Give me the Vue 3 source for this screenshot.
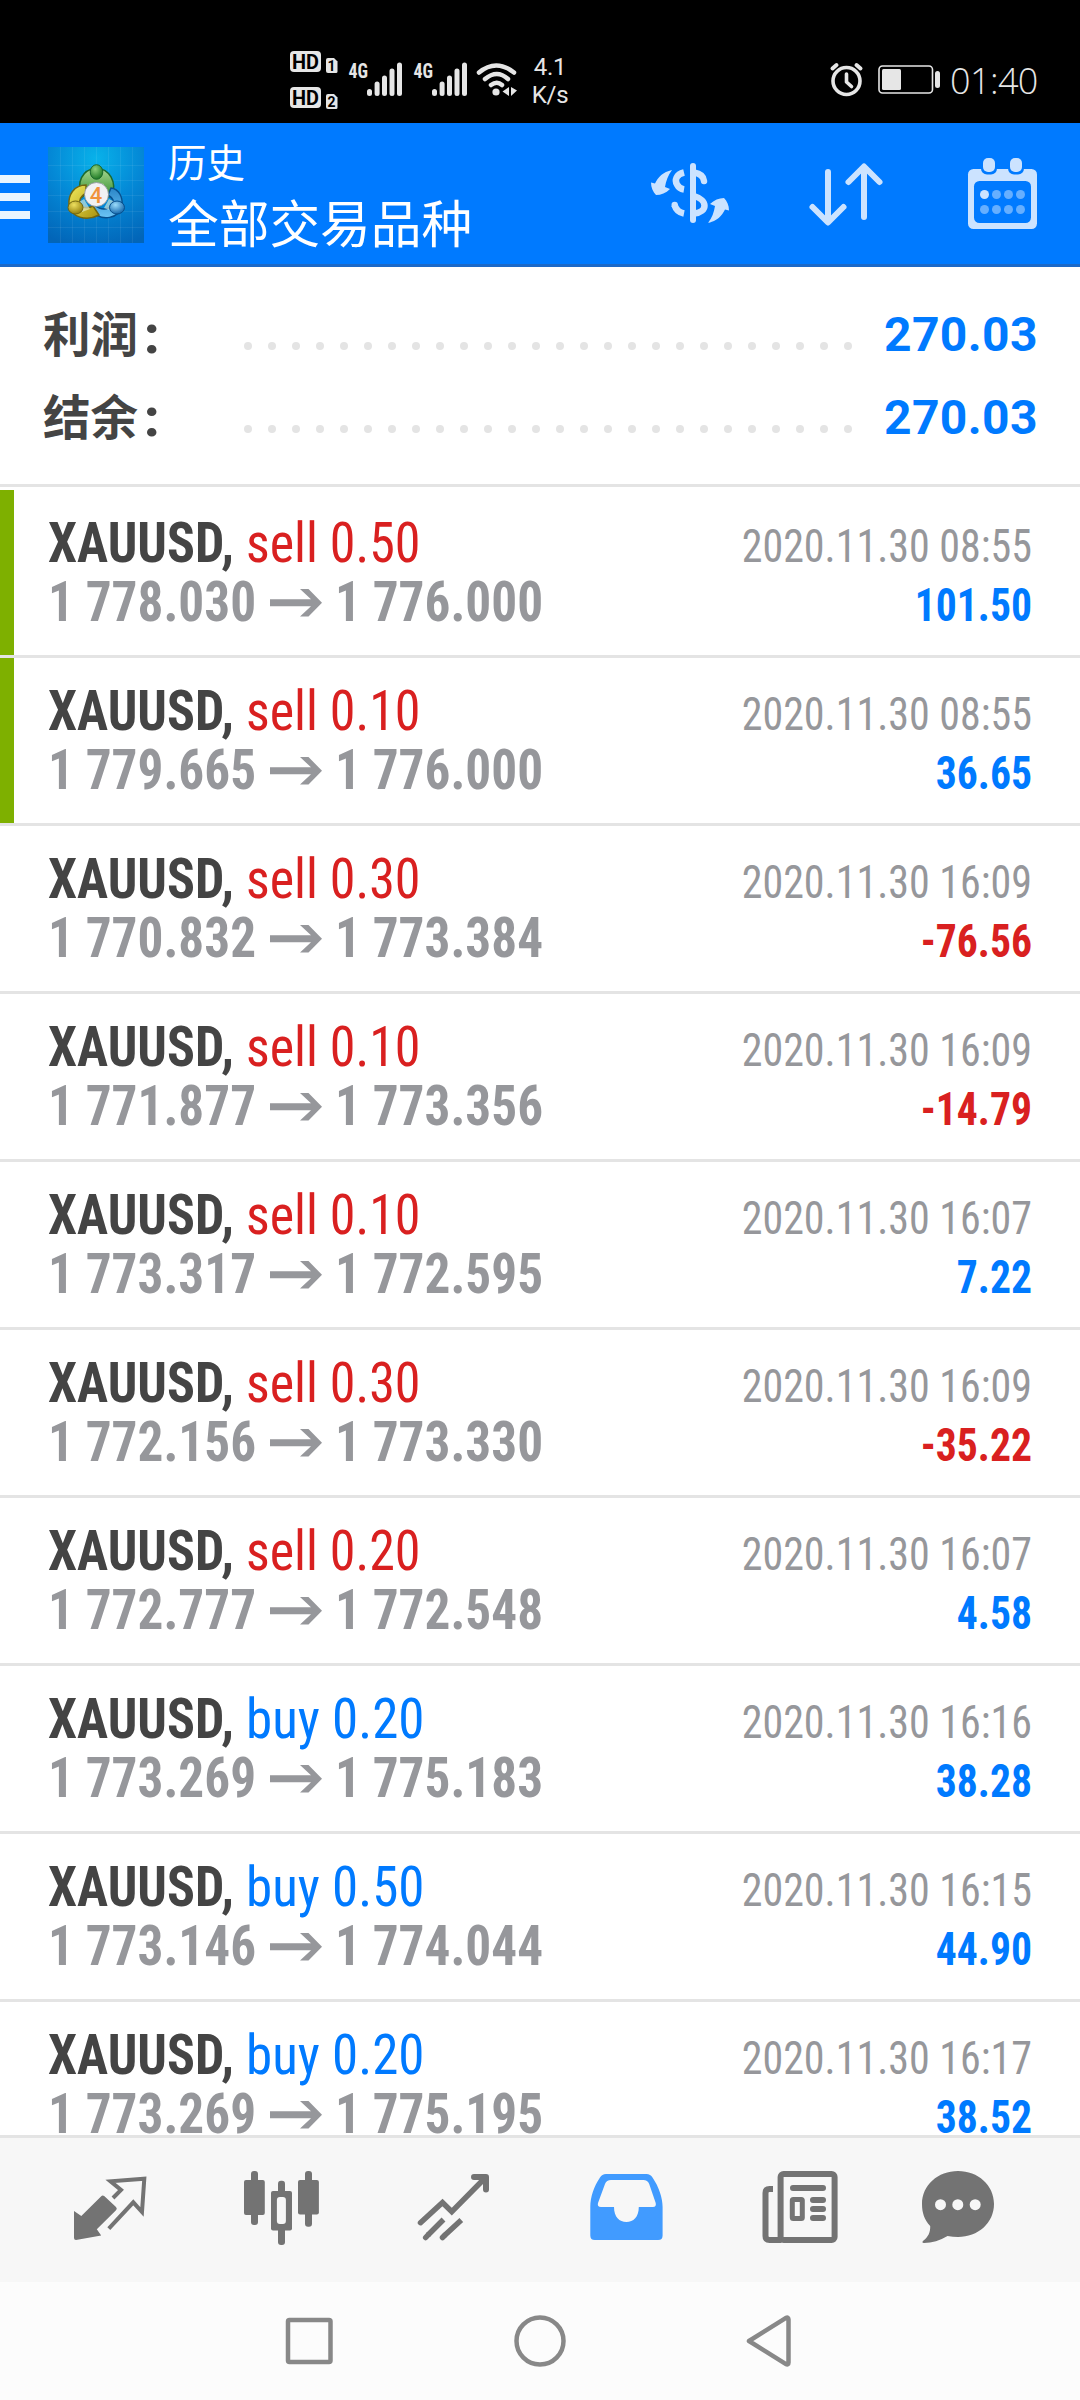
<script setup>
const summary = [
  { label: '利润', value: '270.03' },
  { label: '结余', value: '270.03' },
]
const dots = Array.from({ length: 26 }, (_, i) => i)
const deals = [
  { side: 'sell', vol: '0.50', from: '1 778.030', to: '1 776.000', time: '2020.11.30 08:55', profit: '101.50', mark: true },
  { side: 'sell', vol: '0.10', from: '1 779.665', to: '1 776.000', time: '2020.11.30 08:55', profit: '36.65', mark: true },
  { side: 'sell', vol: '0.30', from: '1 770.832', to: '1 773.384', time: '2020.11.30 16:09', profit: '-76.56' },
  { side: 'sell', vol: '0.10', from: '1 771.877', to: '1 773.356', time: '2020.11.30 16:09', profit: '-14.79' },
  { side: 'sell', vol: '0.10', from: '1 773.317', to: '1 772.595', time: '2020.11.30 16:07', profit: '7.22' },
  { side: 'sell', vol: '0.30', from: '1 772.156', to: '1 773.330', time: '2020.11.30 16:09', profit: '-35.22' },
  { side: 'sell', vol: '0.20', from: '1 772.777', to: '1 772.548', time: '2020.11.30 16:07', profit: '4.58' },
  { side: 'buy', vol: '0.20', from: '1 773.269', to: '1 775.183', time: '2020.11.30 16:16', profit: '38.28' },
  { side: 'buy', vol: '0.50', from: '1 773.146', to: '1 774.044', time: '2020.11.30 16:15', profit: '44.90' },
  { side: 'buy', vol: '0.20', from: '1 773.269', to: '1 775.195', time: '2020.11.30 16:17', profit: '38.52' },
]
</script>

<template>
  <div class="screen">
    <div class="status">
      <svg class="sig" width="230" height="70" viewBox="290 45 230 70" fill="#e6e6e6">
        <g v-for="(n, i) in [1, 2]" :key="n" :transform="`translate(0 ${i * 36})`">
          <rect x="290" y="51" width="31" height="21" rx="4" />
          <text x="305.5" y="69" text-anchor="middle" class="hd" textLength="27" lengthAdjust="spacingAndGlyphs">HD</text>
          <path d="M328 58h6l3.500 3.500V71.500a1.500 1.500 0 0 1-1.500 1.500h-8a2 2 0 0 1-2-2V60a2 2 0 0 1 2-2z" />
          <text x="331.500" y="71" text-anchor="middle" class="sim">{{ n }}</text>
        </g>
        <g v-for="(dx, i) in [0, 65]" :key="'s' + i" :transform="`translate(${dx} 0)`">
          <text x="348.500" y="77.500" class="net" textLength="19.500" lengthAdjust="spacingAndGlyphs">4G</text>
          <path d="M369.500 91.500v2M377.100 84v9.500M384.500 78v15.500M392 71v22.500M399.500 65v28.500" stroke="#e6e6e6" stroke-width="5" stroke-linecap="round" />
        </g>
        <g fill="none" stroke="#e6e6e6" stroke-width="4.500" stroke-linecap="round">
          <path d="M479 72.500q17-14 35 0M485 79q12-10 23 0M491 85q6-4.500 11 0" />
        </g>
        <circle cx="496" cy="92" r="3.600" />
        <path d="M509 87v9l-6.500-4.500zM511 87v9l6-5.500z" />
      </svg>
      <div class="speed"><span>4.1</span><span>K/s</span></div>
      <svg class="pow" width="112" height="40" viewBox="829 60 112 40" fill="none" stroke="#e6e6e6">
        <circle cx="846.500" cy="81" r="13.500" stroke-width="3.600" />
        <path d="M846.500 74v8l5 4.500" stroke-width="3.600" stroke-linecap="round" stroke-linejoin="round" />
        <path d="M832.500 68.500l4-3.500M860.500 68.500l-4-3.500" stroke-width="4" stroke-linecap="round" />
        <rect x="879" y="66" width="53.500" height="27" rx="3.500" stroke-width="1.600" />
        <rect x="882" y="69" width="19" height="21" rx="1.500" fill="#e6e6e6" stroke="none" />
        <rect x="935" y="71" width="5" height="17" rx="2.500" fill="#e6e6e6" stroke="none" />
      </svg>
      <span class="clock">01:40</span>
    </div>

    <header>
      <div class="menu"><i></i><i></i><i></i></div>
      <svg class="logo" width="96" height="96" viewBox="0 0 96 96">
        <defs>
          <radialGradient id="bg" cx=".5" cy=".12" r=".95"><stop offset="0" stop-color="#08b2ea" /><stop offset=".5" stop-color="#0488d6" /><stop offset="1" stop-color="#0265b8" /></radialGradient>
          <linearGradient id="gr" x2="0" y2="1"><stop offset="0" stop-color="#a9d893" /><stop offset="1" stop-color="#2f8d2b" /></linearGradient>
          <linearGradient id="ye" x2="1" y2="1"><stop offset="0" stop-color="#f2ea5c" /><stop offset="1" stop-color="#a8920f" /></linearGradient>
          <linearGradient id="bl" x2="0" y2="1"><stop offset="0" stop-color="#2a86c8" /><stop offset="1" stop-color="#6cc4f4" /></linearGradient>
          <radialGradient id="hg" cx=".4" cy=".3" r=".7"><stop offset="0" stop-color="#8fd07c" /><stop offset="1" stop-color="#1f7a25" /></radialGradient>
          <radialGradient id="hy" cx=".4" cy=".3" r=".7"><stop offset="0" stop-color="#eee060" /><stop offset="1" stop-color="#94800d" /></radialGradient>
          <radialGradient id="hb" cx=".4" cy=".3" r=".7"><stop offset="0" stop-color="#9bdcfb" /><stop offset="1" stop-color="#1468ae" /></radialGradient>
        </defs>
        <rect width="96" height="96" fill="url(#bg)" />
        <path d="M0 18.500h96M0 33.500h96M0 48.500h96M0 64.500h96M0 80.500h96M12.500 0v96M24.500 0v96M36.500 0v96M48.500 0v96M60.500 0v96M72.500 0v96M84.500 0v96" stroke="#fff" stroke-opacity=".07" />
        <path d="M34 50C28 35 34 23 48 21c14 1 21 14 16 28l-8 2q3-14-8-15-10 1-9 10z" fill="url(#gr)" stroke="#1c6a2e" stroke-width="1.500" />
        <path d="M63 41c8 1 12 9 11 18-3 12-19 17-33 4l5-5q11 8 18 0 4-5-4-10z" fill="url(#bl)" stroke="#07508e" stroke-width="1.500" />
        <path d="M38 38c-12 0-18 10-17 20 2 12 17 17 30 10l-6-9q-8 4-13-1-2-7 6-12z" fill="url(#ye)" stroke="#716611" stroke-width="1.500" />
        <path d="M41 37l3 5h9l3-5-8-2zM31 55l5-3 6 10-8 3zM56 61l5-9 6 3-3 9z" fill="#e8f3dc" fill-opacity=".6" />
        <ellipse cx="48.500" cy="25" rx="6.300" ry="7.300" fill="url(#hg)" stroke="#1c6a2e" />
        <ellipse cx="27.500" cy="60.500" rx="7.500" ry="6.500" fill="url(#hy)" stroke="#716611" />
        <ellipse cx="69" cy="60.500" rx="7.500" ry="6.500" fill="url(#hb)" stroke="#07508e" />
        <circle cx="48.500" cy="47.500" r="12" fill="#f1f1f3" stroke="#8a8f94" stroke-width=".8" />
        <text x="48" y="55.500" text-anchor="middle" class="four">4</text>
      </svg>
      <div class="titles"><span class="t1">历史</span><span class="t2">全部交易品种</span></div>
      <svg class="act" width="400" height="80" viewBox="645 153 400 80" fill="#cce3ff">
        <g>
          <path d="M684 172.500c-8 2-9.500 7.500-7 12 1.500 3 4 4.500 7 5M674.500 205c1.500 5 4.500 7.500 9.500 8.500" fill="none" stroke="#cce3ff" stroke-width="6.500" />
          <circle cx="674.700" cy="205" r="3.200" />
          <path d="M693 166v54" stroke="#cce3ff" stroke-width="6" stroke-linecap="round" />
          <path d="M694 172.500c6 1 9.500 3.500 10 8.500M694 196c14 4 14 16 0 17.500" fill="none" stroke="#cce3ff" stroke-width="6.500" stroke-linecap="round" />
          <path d="M672 170c-9 2-14 7-17 13.500l-4-1c0 5 2 9.500 5 12.500 5 0 10-2 14-6l-5-2c1-6 3-12 7-17z" />
          <path d="M708 223c9-2 14-7 17-13.500l4 1c0-5-2-9.500-5-12.500-5 0-10 2-14 6l5 2c-1 6-3 12-7 17z" />
        </g>
        <path d="M828 172v50M812.500 207l15.500 15.500 15.500-15.500M864 217v-50M848.500 182l15.500-15.500 15.500 15.500" fill="none" stroke="#cce3ff" stroke-width="6" stroke-linecap="round" stroke-linejoin="round" />
        <rect x="968" y="169" width="69" height="60" rx="5.500" />
        <rect x="974" y="181" width="57" height="42" rx="5.500" fill="#007aff" />
        <g v-for="x in [983, 1010]" :key="x">
          <rect :x="x - 2" y="156" width="16" height="18.500" rx="6" fill="#007aff" />
          <rect :x="x" y="158" width="12" height="14" rx="5" />
        </g>
        <g fill="#66afff">
          <circle cx="984.500" cy="194.500" r="4.500" fill="#cce3ff" />
          <circle v-for="x in [996.500, 1008.500, 1020.500]" :key="x" :cx="x" cy="194.500" r="4.500" />
          <circle v-for="x in [984.500, 996.500, 1008.500, 1020.500]" :key="'b' + x" :cx="x" cy="209.500" r="4.500" />
        </g>
      </svg>
    </header>

    <section class="summary">
      <div v-for="s in summary" :key="s.label" class="sum">
        <span class="label">{{ s.label }}<b>:</b></span>
        <span class="dots"><i v-for="d in dots" :key="d"></i></span>
        <span class="total">{{ s.value }}</span>
      </div>
    </section>

    <main>
      <article v-for="(d, i) in deals" :key="i" :class="{ mark: d.mark }">
        <div class="left">
          <div class="line1"><b>XAUUSD,</b><span :class="d.side">{{ d.side }} {{ d.vol }}</span></div>
          <div class="line2">
            <span>{{ d.from }}</span>
            <svg width="52" height="28" viewBox="0 0 52 28" fill="#96979b"><path d="M0 10.300h41L30 0h8.500L52 13.800 38.500 27.500H30L41 17.300H0z" /></svg>
            <span>{{ d.to }}</span>
          </div>
        </div>
        <div class="right">
          <div class="time">{{ d.time }}</div>
          <div class="profit" :class="{ neg: d.profit[0] === '-' }">{{ d.profit }}</div>
        </div>
      </article>
    </main>

    <nav class="tabs">
      <svg viewBox="0 0 80 80" fill="#737373">
        <path d="M4 43l7.300 5L31 28.500q1.600-2 3.200-.4L46 39q1.600 1.700 0 3.200L26.800 61.300l4.400 6.200L6 72q-2 0-2-2z" />
        <path d="M43 30l8-8-10.500-8.700 33.800-2.600L72 44l-8.700-9.700L38.800 60.700" fill="none" stroke="#737373" stroke-width="4" />
      </svg>
      <svg viewBox="0 0 80 80" fill="#737373">
        <rect x="10" y="3" width="7" height="54" rx="3" /><rect x="3" y="12" width="20.800" height="35" rx="2" />
        <rect x="64" y="3" width="7" height="55.700" rx="3" /><rect x="57" y="12" width="20.900" height="34.500" rx="2" />
        <rect x="37" y="12.700" width="7" height="64.300" rx="3" /><rect x="30" y="23" width="21" height="39.500" rx="2" />
        <rect x="35.900" y="29" width="9" height="27" rx="3" fill="#f7f7f7" />
      </svg>
      <svg viewBox="0 0 80 80" fill="none" stroke="#737373" stroke-width="5.500">
        <path d="M7.500 54.700l22-20.200 9.300 9.200L72 10" stroke-linecap="round" />
        <path d="M61 9h12v12.500" stroke-width="6" stroke-linecap="round" stroke-linejoin="round" />
        <path d="M30.500 51.500L15 67M48.300 52L31.500 67.500" /><path d="M15 67l-2.300 2.500M31.500 67.500l-2 2" stroke-linecap="round" />
      </svg>
      <svg viewBox="0 0 80 80" fill="#419bff">
        <path fill-rule="evenodd" d="M20 6h40.500q4 0 6 3.500C73 19 76.600 30 76.600 39v28.500q0 4.500-4.500 4.500H8.800q-4.500 0-4.500-4.500V39c0-10 3.500-20.500 9.700-29.500Q16 6 20 6zM25 12q-4.500 0-6 4l-7 19q-1 4 3 4h13c0 10 5.500 15 12.400 15S52.800 49 52.800 39H67q3.500 0 2.700-4l-6.500-19q-1.500-4-6-4z" />
      </svg>
      <svg viewBox="0 0 80 80" fill="none" stroke="#737373" stroke-width="6">
        <rect x="20.600" y="6" width="54" height="66" rx="3" />
        <path d="M13 21H9.500Q5.500 21 5.500 25v43q0 4 4 4h12" />
        <path d="M33 20h30M53 32h10M53 41h10M53 50h10" stroke-linecap="round" />
        <rect x="32.300" y="31.500" width="10" height="19" rx="1" stroke-width="5" />
      </svg>
      <svg viewBox="0 0 80 80" fill="#737373">
        <path d="M40 3c20 0 36 14 36 33S60 69 40 69q-5 0-10.500-1C22 72.500 14 75 6 75q-3-.2-.5-2.500c4.500-3.500 7-8 6.700-14.500C6.500 52 4 45 4 36 4 17 20 3 40 3z" />
        <g fill="#f7f7f7"><circle cx="22.500" cy="36.700" r="5.500" /><circle cx="39.800" cy="36.700" r="5.500" /><circle cx="57.200" cy="36.700" r="5.500" /></g>
      </svg>
    </nav>

    <footer>
      <svg width="540" height="60" viewBox="270 2311 540 60" fill="none" stroke="#888" stroke-width="4.500" stroke-linejoin="round">
        <rect x="288" y="2320" width="42.500" height="42" rx="1.500" />
        <circle cx="540" cy="2341" r="23.500" />
        <path d="M749 2341L786 2317.800Q788.500 2317 788.500 2319.500V2362.500Q788.500 2365 786 2364.200Z" />
      </svg>
    </footer>
  </div>
</template>

<style>
body { margin: 0; background: #fff; }
</style>

<style scoped>
.screen { width: 1080px; height: 2400px; display: flex; flex-direction: column; overflow: hidden; background: #fff; font-family: Roboto, "Noto Sans CJK SC", sans-serif; }
.screen > * { flex: none; box-sizing: border-box; }
svg { display: block; flex: none; }
.status { height: 123px; background: #000; color: #e6e6e6; display: flex; padding: 45px 0 0 290px; }
.hd { font: 700 21px Roboto, sans-serif; fill: #000; }
.sim { font: 700 14px Roboto, sans-serif; fill: #000; }
.net { font: 700 20px Roboto, sans-serif; font-stretch: 75%; }
.speed { margin: 8px 0 0 7px; width: 46px; display: flex; flex-direction: column; font-size: 24px; line-height: 28px; align-items: center; font-weight: 400; letter-spacing: -.3px; }
.pow { margin: 15px 0 0 256px; }
.clock { margin: 12px 0 0 9px; font: 300 36px/48px "Open Sans", sans-serif; letter-spacing: -.6px; }

header { height: 144px; background: #007aff; border-bottom: 3px solid #1c69c8; display: flex; }
.menu { width: 30px; margin-top: 52px; display: flex; flex-direction: column; gap: 10px; }
.menu i { height: 8px; background: #eaf5ff; }
.logo { margin: 24px 0 0 18px; }
.four { font: 500 22px Roboto, sans-serif; fill: #f0923c; }
.titles { width: 401px; margin: 9px 0 0 24px; display: flex; flex-direction: column; color: #fff; font-family: "Noto Sans CJK SC", sans-serif; }
.t1 { font-size: 38.500px; line-height: 56px; }
.t2 { font-size: 50.700px; line-height: 66px; }
.act { margin: 30px 0 0 76px; }

.summary { height: 220px; padding: 24px 45px 0 43px; border-bottom: 3px solid #e4e4e4; }
.sum { height: 83px; display: flex; align-items: flex-start; font-weight: 700; font-size: 48px; line-height: 87px; }
.label { width: 201px; color: #444; display: flex; font-size: 47.500px; line-height: 90px; }
.label b { margin-left: 6px; font-size: 52px; line-height: 90px; }
.dots { width: 608px; display: flex; gap: 16px; padding-top: 51px; }
.dots i { width: 8px; height: 8px; border-radius: 50%; background: #e4e4e4; flex: none; }
.total { flex: 1; color: #007aff; text-align: right; margin-right: -3px; letter-spacing: .4px; }

main { height: 1648px; padding-top: 3px; }
article { box-sizing: border-box; height: 168px; border-bottom: 3px solid #e4e4e4; display: flex; justify-content: space-between; padding: 24px 48px 0 48px; background: #fff; }
article:last-child { height: 133px; border-bottom: 0; }
.mark { box-shadow: inset 14px 0 #7eb000; }
.line1, .line2 { height: 59px; line-height: 59px; font-size: 55px; font-stretch: 75%; white-space: nowrap; display: flex; }
.line1 { color: #444; }
.line1 > *, .line2 > span { display: block; transform-origin: 0 50%; }
.line1 b { width: 198px; transform: scaleX(.944); }
.line1 .sell { transform: scaleX(.945); }
.line1 .buy { transform: scaleX(.964); }
.line2 { color: #96979b; font-weight: 700; align-items: center; }
.line2 > span { width: 222px; transform: scaleX(.932); }
.line2 svg { margin: 0 13px 0 0; }
.right { text-align: right; font-size: 46px; font-stretch: 75%; padding-top: 3px; }
.time, .profit { height: 59px; line-height: 59px; transform-origin: 100% 50%; }
.time { color: #96979b; transform: scaleX(.913); }
.profit { color: #007aff; font-weight: 700; transform: scaleX(.905); }
.sell, .neg { color: #d92020; }
.buy { color: #007aff; }

.tabs { height: 147px; background: #f7f7f7; border-top: 3px solid #e4e4e4; padding: 30px 0 0 70px; display: grid; grid-template-columns: 171px 172px 173px 174px 158px 80px; }
.tabs svg { width: 80px; height: 80px; }
footer { height: 118px; background: #fcfcfc; padding: 29px 0 0 270px; }
</style>
